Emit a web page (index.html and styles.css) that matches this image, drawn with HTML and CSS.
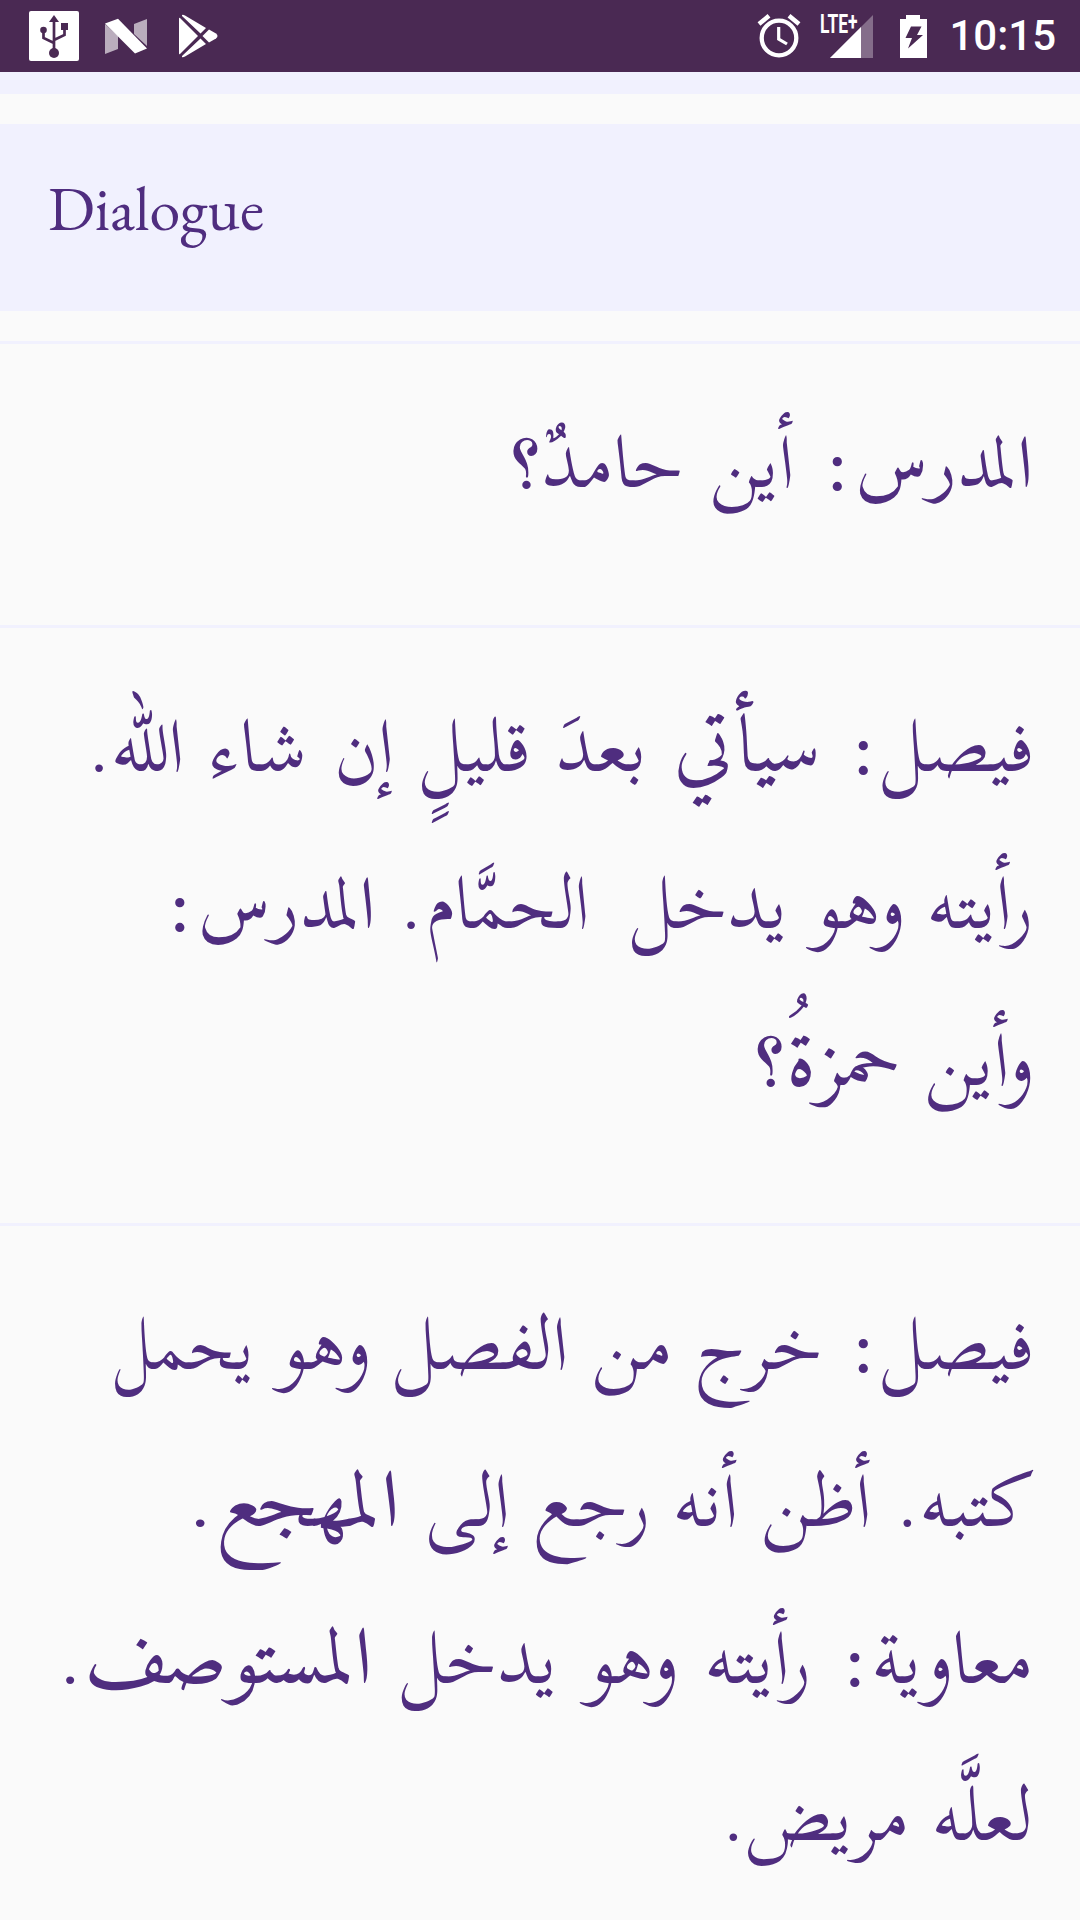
FILE: index.html
```html
<!DOCTYPE html>
<html lang="en">
<head>
  <meta charset="UTF-8">
  <title>Dialogue</title>
  <link rel="stylesheet" href="styles.css">
</head>
<body>

  <!-- Status bar -->
  <div class="status-bar">
    <div class="notifications">
      <svg class="usb" viewBox="0 0 50 50" width="50" height="50">
        <rect width="50" height="50" rx="2" fill="#fff"/>
        <path d="M25 9V40M25 32L14.500 27V19M25 29L35.500 24V16" fill="none" stroke="#4a2953" stroke-width="2.700"/>
        <path d="M20 11L25 4L30 11Z" fill="#4a2953"/>
        <circle cx="25" cy="42" r="5" fill="#4a2953"/>
        <circle cx="14.500" cy="19" r="3.300" fill="#4a2953"/>
        <rect x="32" y="12" width="7" height="7" fill="#4a2953"/>
      </svg>
      <svg class="nougat" viewBox="0 0 42 36" width="42" height="36">
        <path d="M0 6L13 18V31L0 36ZM29 6L42 1V28L29 16Z" fill="#fff" opacity=".62"/>
        <path d="M0 5.500L13 .800L42 30.500L30 35.500Z" fill="#fff"/>
      </svg>
      <svg class="play" viewBox="0 0 40 44" width="40" height="44" fill="#fff">
        <path d="M1 4Q0 3 0 5V39Q0 41 1 40L19 22Z"/>
        <path d="M3 1Q4 .300 6 1.500L27 14L21.500 19.500L3 2Z"/>
        <path d="M3 43Q4 43.700 6 42.500L27 30L21.500 24.500L3 42Z"/>
        <path d="M30 15.500L37 19.500Q40 22 37 24.500L30 28.500L23.500 22Z"/>
      </svg>
    </div>
    <div class="system">
      <svg class="alarm" viewBox="0 0 44 44" width="44" height="44" fill="none" stroke="#fff">
        <circle cx="22" cy="24" r="17.300" stroke-width="4.300"/>
        <path d="M21.700 13V25L30 30" stroke-width="3.200"/>
        <path d="M2 10L12 1.800M42 10L32 1.800" stroke-width="4.500"/>
      </svg>
      <div class="signal">
        <svg viewBox="0 0 43 43" width="43" height="43" fill="#fff">
          <path d="M0 43L43 0V43Z" opacity=".32"/>
          <path d="M0 43L31 12V43Z"/>
        </svg>
        <span class="network">LTE<span class="plus">+</span></span>
      </div>
      <svg class="battery" viewBox="0 0 27 43" width="27" height="43">
        <path d="M6 0H20V4H27V43H0V4H6Z" fill="#fff"/>
        <path d="M11 11.500H21.500L17 20H23L8 33.500L12 23H5.500Z" fill="#4a2953"/>
      </svg>
      <span class="clock">10:15</span>
    </div>
  </div>

  <div class="card-end"></div>

  <div class="section-title">Dialogue</div>

  <!-- Lines of the dialogue, .lig words use the font with the stacked ligatures -->
  <div class="dialogue" dir="rtl" lang="ar">
    <div class="row">
      <span class="line loose"><span class="lig small">المدرس</span>: أين حامدٌ؟</span>
    </div>
    <div class="row">
      <span class="line loose">فيصل: <span class="lig">سيأتي</span> بعدَ قليلٍ إن شاء الله.</span>
      <span class="line">رأيته وهو يدخل <span class="tight">الحمَّام</span>. <span class="lig small">المدرس</span>:</span>
      <span class="line">وأين <span class="lig">حمزةُ</span>؟</span>
    </div>
    <div class="row">
      <span class="line">فيصل: خرج من الفصل وهو <span class="narrow">يحمل</span></span>
      <span class="line">كتبه. أظن أنه رجع إلى <span class="lig wide">المهجع<span class="stop">.</span></span></span>
      <span class="line looser">معاوية: رأيته وهو يدخل <span class="lig wider">المستوصف<span class="stop">.</span></span></span>
      <span class="line">لعلَّه مريض.</span>
    </div>
  </div>

</body>
</html>
```
FILE: styles.css
```css
* {
  box-sizing: border-box;
}

body {
  margin: 0;
  height: 1920px;
  overflow: hidden;
  background: #fafafa;
  color: #4f2d7f;
  font-family: "EB Garamond", "Liberation Serif", serif;
}

.status-bar {
  display: flex;
  justify-content: space-between;
  height: 72px;
  padding: 0 24px 0 29px;
  background: #4a2953;
  color: #fff;
  font-family: Roboto, sans-serif;
}

.status-bar svg {
  display: block;
}

.notifications,
.system {
  display: flex;
  align-items: center;
}

.nougat {
  margin-left: 26px;
}

.play {
  margin-left: 32px;
}

.alarm {
  margin-right: 19px;
}

.signal {
  position: relative;
  width: 53px;
  padding-left: 10px;
  margin-right: 27px;
}

.network {
  position: absolute;
  left: 0;
  top: -4px;
  font-size: 26px;
  font-weight: 700;
  line-height: 27px;
  transform: scaleX(0.67);
  transform-origin: left;
}

.plus {
  position: relative;
  top: -3px;
}

.battery {
  margin-right: 22px;
}

.clock {
  font-size: 42px;
  font-weight: 500;
  line-height: 76px;
}

.card-end {
  height: 22px;
  background: #f1f1fe;
}

.section-title {
  height: 187px;
  margin: 30px 0;
  padding: 50px 48px;
  background: #f1f1fe;
  font-size: 62px;
  line-height: 68px;
}

.row {
  padding: 40px 47px 84px;
  border-top: 3px solid #f1f1fe;
}

.line {
  display: block;
  height: 157px;
  font-family: "Scheherazade New", Amiri, "DejaVu Sans", serif;
  font-size: 75px;
  line-height: 157px;
  word-spacing: 4px;
  white-space: nowrap;
}

.loose {
  word-spacing: 6.500px;
}

.looser {
  word-spacing: 8px;
}

.lig {
  font-family: Amiri, "Scheherazade New", "DejaVu Sans", serif;
  font-size: 80px;
  line-height: 1;
}

.small {
  font-size: 73px;
}

.stop {
  font-family: "Scheherazade New", "DejaVu Sans", serif;
  font-size: 75px;
}

.narrow,
.tight,
.wide,
.wider {
  display: inline-block;
  line-height: 1;
  transform-origin: right;
}

.narrow {
  transform: scaleX(0.87);
}

.tight {
  margin-right: 17px;
  margin-left: -15px;
  transform: scaleX(0.9);
}

.wide {
  transform: scaleX(1.12);
}

.wider {
  transform: scaleX(1.05);
}
```
